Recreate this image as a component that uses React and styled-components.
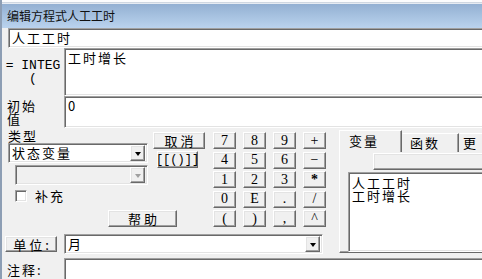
import React from "react";
import styled, { createGlobalStyle, css } from "styled-components";

const GlobalStyle = createGlobalStyle`
  html, body {
    margin: 0;
    padding: 0;
    background: #f0f0f0;
    overflow: hidden;
  }
  body {
    font-family: "Noto Sans CJK SC", "Liberation Sans", sans-serif;
    font-size: 13px;
    letter-spacing: 2px;
    color: #000;
  }
  * { box-sizing: border-box; }
`;

// classic win32 bevels
const sunken = css`
  border: 1px solid;
  border-color: #a0a0a0 #fff #fff #a0a0a0;
  box-shadow: inset 1px 1px 0 #696969, inset -1px -1px 0 #e3e3e3;
`;

const raised = css`
  border: 1px solid;
  border-color: #fff #696969 #696969 #fff;
  box-shadow: inset -1px -1px 0 #a0a0a0, inset 1px 1px 0 #e3e3e3;
  background: #f0f0f0;
`;

const Viewport = styled.div`
  width: 482px;
  height: 279px;
  overflow: hidden;
`;

const Dialog = styled.div`
  width: 540px;
  height: 300px;
  border-left: 2px solid #8d9eb4;
  background: #f0f0f0;
  display: flex;
  flex-direction: column;
`;

const TopEdge = styled.div`
  height: 4px;
  background: linear-gradient(#fbfcfd 0 2px, #cfd7e1 2px 3px, #e6ebf2 3px);
`;

const TitleBar = styled.div`
  height: 24px;
  line-height: 24px;
  padding-left: 5px;
  font-size: 12px;
  letter-spacing: 0;
  color: #111;
  background: linear-gradient(#93b0d2, #bad3ee);
`;

const NameRow = styled.div`
  height: 20px;
  padding-left: 6px;
  display: flex;
`;

const TextInput = styled.div`
  ${sunken};
  flex: 1;
  background: #fff;
  padding: 0 3px;
  line-height: 18px;
`;

const FieldRow = styled.div`
  display: grid;
  grid-template-columns: 62px 1fr;
  height: ${(p) => p.$h}px;
  margin-top: ${(p) => p.$mt || 0}px;
`;

const EqLabel = styled.div`
  display: flex;
  flex-direction: column;
  justify-content: center;
  align-items: center;
  font-family: "Liberation Mono", monospace;
  font-size: 13px;
  letter-spacing: 0;
  line-height: 13px;
  white-space: pre;
`;

const SideLabel = styled.div`
  display: flex;
  flex-direction: column;
  justify-content: ${(p) => (p.$top ? "flex-start" : "center")};
  padding: ${(p) => (p.$top ? "5px" : "0")} 0 0 5px;
  line-height: 13px;
`;

const TextBox = styled.div`
  ${sunken};
  background: #fff;
  padding: 2px 3px;
  line-height: 14px;
`;

const Middle = styled.div`
  display: flex;
  height: 126px;
`;

const LeftArea = styled.div`
  width: 337px;
  display: flex;
  flex-direction: column;
`;

const TopRow = styled.div`
  display: flex;
  height: 100px;
`;

const TypeGrid = styled.div`
  display: grid;
  grid-template-columns: 148px 60px;
  grid-template-rows: 77px 23px;
`;

const TypeCol = styled.div`
  padding-left: 6px;
  display: flex;
  flex-direction: column;
`;

const TypeLabel = styled.div`
  height: 15px;
  padding-top: 1px;
  line-height: 13px;
`;

const Select = styled.div`
  ${sunken};
  background: ${(p) => (p.$disabled ? "#f0f0f0" : "#fff")};
  width: ${(p) => p.$w}px;
  height: 20px;
  margin: ${(p) => p.$m || "0"};
  display: flex;
  align-items: center;
  padding: 0 2px 0 3px;
  line-height: 16px;
`;

const SelectText = styled.span`
  flex: 1;
`;

const ArrowBtn = styled.span`
  ${raised};
  width: 15px;
  height: 16px;
  display: flex;
  align-items: center;
  justify-content: center;

  &::after {
    content: "";
    border-left: 3.5px solid transparent;
    border-right: 3.5px solid transparent;
    border-top: 4px solid ${(p) => (p.$disabled ? "#a0a0a0" : "#000")};
    margin-top: 1px;
  }
`;

const CheckRow = styled.label`
  display: flex;
  align-items: center;
  gap: 8px;
  margin: 4px 0 0 7px;
  height: 13px;
`;

const CheckBox = styled.span`
  ${sunken};
  width: 12px;
  height: 12px;
  background: #fff;
`;

const OpsCol = styled.div`
  display: flex;
  flex-direction: column;
  align-items: flex-start;
`;

const Button = styled.div`
  ${raised};
  width: ${(p) => p.$w}px;
  height: ${(p) => p.$h || 17}px;
  margin: ${(p) => p.$m || "0"};
  display: flex;
  align-items: center;
  justify-content: center;
  font-size: ${(p) => (p.$mono ? "12px" : "13px")};
  font-family: ${(p) =>
    p.$mono
      ? `"Liberation Mono", monospace`
      : `"Noto Sans CJK SC", "Liberation Sans", sans-serif`};
  letter-spacing: ${(p) => (p.$mono ? "0" : "3px")};
  padding-left: ${(p) => (p.$mono ? 0 : 3)}px;
  line-height: 1;
`;

const HelpCell = styled.div`
  grid-column: 1 / 3;
  padding: 5px 0 0 106px;
`;

const Keypad = styled.div`
  display: grid;
  grid-template-columns: repeat(4, 23px);
  grid-auto-rows: 17px;
  column-gap: 7px;
  row-gap: 2.5px;
  margin: 4px 0 0 3px;
`;

const Key = styled.div`
  ${raised};
  display: flex;
  align-items: center;
  justify-content: center;
  font-family: "Liberation Serif", serif;
  font-size: 14px;
  letter-spacing: 0;
  font-weight: ${(p) => (p.$bold ? 700 : 400)};
  line-height: 1;
`;

const UnitRow = styled.div`
  display: flex;
  align-items: center;
  height: 20px;
  margin-top: 6px;
`;

const TabPanel = styled.div`
  flex: 1;
  display: flex;
  flex-direction: column;
  margin-bottom: 1px;
`;

const TabStrip = styled.div`
  height: 24px;
  display: flex;
  align-items: flex-end;
`;

const Tab = styled.div`
  width: ${(p) => p.$w}px;
  height: ${(p) => (p.$active ? 22 : 19)}px;
  border-top: 1px solid #fff;
  border-left: 1px solid ${(p) => (p.$first ? "#fff" : "transparent")};
  border-right: 1px solid #696969;
  box-shadow: inset -1px 0 0 #a0a0a0;
  padding: ${(p) => (p.$active ? "2px" : "1px")} 0 0 ${(p) => p.$pl}px;
  line-height: 15px;
  background: #f0f0f0;
`;

const TabBody = styled.div`
  flex: 1;
  border-left: 1px solid #fff;
  border-bottom: 1px solid #696969;
  box-shadow: inset 0 -1px 0 #a0a0a0;
  display: flex;
  flex-direction: column;
`;

const HeaderBar = styled.div`
  ${raised};
  height: 17px;
  margin: 1px 0 0 33px;
`;

const ListBox = styled.div`
  ${sunken};
  background: #fff;
  height: 80px;
  margin: 2px 0 0 8px;
  padding: 3px 3px 0 3px;
  line-height: 13px;
`;

const keys = ["7", "8", "9", "+", "4", "5", "6", "\u2212", "1", "2", "3", "*", "0", "E", ".", "/", "(", ")", ",", "^"];

const App = () => {
  return (
    <Viewport>
      <GlobalStyle />
      <Dialog>
        <TopEdge />
        <TitleBar>编辑方程式人工工时</TitleBar>
        <NameRow>
          <TextInput>人工工时</TextInput>
        </NameRow>
        <FieldRow $h={48}>
          <EqLabel>
            <span>= INTEG</span>
            <span>(</span>
          </EqLabel>
          <TextBox>工时增长</TextBox>
        </FieldRow>
        <FieldRow $h={32}>
          <SideLabel>
            <span>初始</span>
            <span>值</span>
          </SideLabel>
          <TextBox>0</TextBox>
        </FieldRow>
        <Middle>
          <LeftArea>
            <TopRow>
              <TypeGrid>
                <TypeCol>
                  <TypeLabel>类型</TypeLabel>
                  <Select $w={140}>
                    <SelectText>状态变量</SelectText>
                    <ArrowBtn />
                  </Select>
                  <Select $w={133} $m="2px 0 0 7px" $disabled>
                    <SelectText />
                    <ArrowBtn $disabled />
                  </Select>
                  <CheckRow>
                    <CheckBox />
                    补充
                  </CheckRow>
                </TypeCol>
                <OpsCol>
                  <Button $w={52} $m="4px 0 0 3px">取消</Button>
                  <Button $w={41} $m="2px 0 0 7px" $mono>[[()]]</Button>
                </OpsCol>
                <HelpCell>
                  <Button $w={69}>帮助</Button>
                </HelpCell>
              </TypeGrid>
              <Keypad>
                {keys.map((k) => (
                  <Key key={k} $bold={k === "*"}>{k}</Key>
                ))}
              </Keypad>
            </TopRow>
            <UnitRow>
              <Button $w={52} $h={16} $m="0 0 0 3px">单位:</Button>
              <Select $w={259} $m="0 0 0 7px">
                <SelectText>月</SelectText>
                <ArrowBtn />
              </Select>
            </UnitRow>
          </LeftArea>
          <TabPanel>
            <TabStrip>
              <Tab $w={63} $pl={9} $active $first>变量</Tab>
              <Tab $w={57} $pl={7}>函数</Tab>
              <Tab $w={40} $pl={3}>更</Tab>
            </TabStrip>
            <TabBody>
              <HeaderBar />
              <ListBox>
                <div>人工工时</div>
                <div>工时增长</div>
              </ListBox>
            </TabBody>
          </TabPanel>
        </Middle>
        <FieldRow $h={40} $mt={4}>
          <SideLabel $top>注释:</SideLabel>
          <TextBox />
        </FieldRow>
      </Dialog>
    </Viewport>
  );
};

export default App;
